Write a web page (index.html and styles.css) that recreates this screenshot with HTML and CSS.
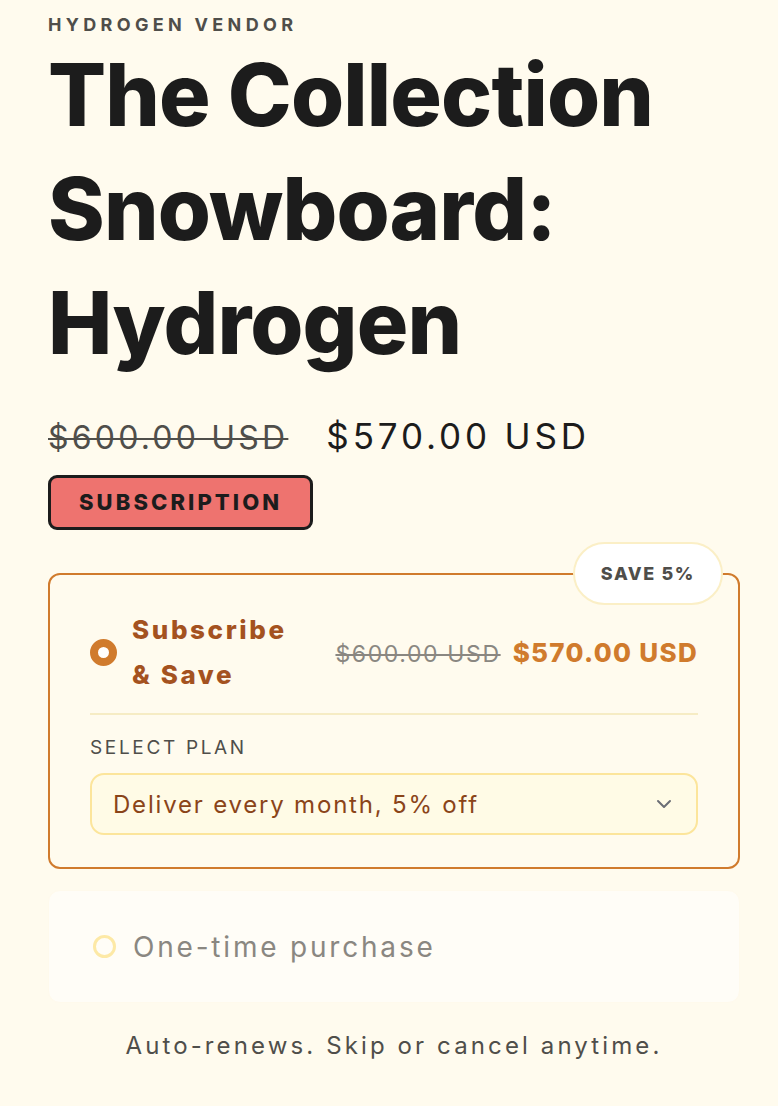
FILE: index.html
```html
<!DOCTYPE html>
<html lang="en">
<head>
<meta charset="utf-8">
<title>The Collection Snowboard: Hydrogen</title>
<link rel="stylesheet" href="styles.css">
</head>
<body>
<main class="product">
  <p class="vendor">HYDROGEN VENDOR</p>
  <h1 class="title">The Collection Snowboard: Hydrogen</h1>
  <div class="price-row">
    <span class="price-old">$600.00 USD</span>
    <span class="price-new">$570.00 USD</span>
  </div>
  <span class="badge">SUBSCRIPTION</span>

  <section class="plan plan-active">
    <span class="save-pill">SAVE 5%</span>
    <div class="plan-head">
      <span class="radio radio-on"></span>
      <span class="plan-name">Subscribe<br>&amp; Save</span>
      <span class="plan-prices">
        <span class="plan-old">$600.00 USD</span>
        <span class="plan-new">$570.00 USD</span>
      </span>
    </div>
    <div class="plan-body">
      <p class="label">SELECT PLAN</p>
      <div class="select">
        <span>Deliver every month, 5% off</span>
        <svg class="chev" width="16" height="10" viewBox="0 0 16 10"><path d="M2 2 L8 8 L14 2" fill="none" stroke="#6b6e75" stroke-width="2" stroke-linecap="round" stroke-linejoin="round"/></svg>
      </div>
    </div>
  </section>

  <section class="plan plan-idle">
    <span class="radio radio-off"></span>
    <span class="idle-name">One-time purchase</span>
  </section>

  <p class="note">Auto-renews. Skip or cancel anytime.</p>
</main>
</body>
</html>
```

FILE: styles.css
```css
* { box-sizing: border-box; }
html, body { margin: 0; padding: 0; }
body {
  background: #fffbee;
  font-family: "Inter", "Liberation Sans", sans-serif;
  color: #1c1c1c;
}
.product {
  padding: 0 38px 0 48px;
  display: flex;
  flex-direction: column;
  align-items: flex-start;
}
.vendor {
  margin: 14px 0 0;
  font-size: 18px;
  line-height: 22px;
  font-weight: 700;
  letter-spacing: 0.24em;
  color: #4f4e4a;
}
.title {
  margin: 2px 0 0;
  font-size: 86px;
  line-height: 114px;
  font-weight: 800;
  letter-spacing: -0.01em;
  color: #1c1c1c;
}
.price-row {
  margin-top: 36px;
  display: flex;
  align-items: baseline;
  gap: 38px;
  line-height: 40px;
}
.price-old {
  font-size: 32px;
  letter-spacing: 0.1em;
  color: #4f4e4a;
  text-decoration: line-through;
  text-decoration-thickness: 2px;
}
.price-new {
  font-size: 35px;
  letter-spacing: 0.11em;
  color: #1c1c1c;
}
.badge {
  margin-top: 17px;
  display: inline-block;
  padding: 0 28px;
  height: 55px;
  line-height: 49px;
  border: 3px solid #1c1c1c;
  border-radius: 9px;
  background: #ee736f;
  font-size: 22px;
  font-weight: 800;
  letter-spacing: 0.14em;
  color: #1c1c1c;
}
.plan {
  width: 692px;
  border-radius: 12px;
  position: relative;
}
.plan-active {
  margin-top: 43px;
  border: 2px solid #d07b2d;
  padding: 32px 40px 32px 40px;
}
.save-pill {
  position: absolute;
  top: -33px;
  right: 15px;
  height: 63px;
  padding: 0 26px;
  display: flex;
  align-items: center;
  background: #ffffff;
  border: 2px solid #fbefc6;
  border-radius: 32px;
  font-size: 18px;
  font-weight: 800;
  letter-spacing: 0.09em;
  color: #4f4e4a;
}
.plan-head {
  display: flex;
  align-items: center;
  padding-bottom: 16px;
  border-bottom: 2px solid #f6ecc4;
}
.radio {
  flex: none;
  display: inline-block;
  border-radius: 50%;
}
.radio-on {
  width: 27px;
  height: 27px;
  border: 8px solid #d07b2d;
  background: #ffffff;
}
.plan-name {
  margin-left: 15px;
  font-size: 26px;
  line-height: 45px;
  font-weight: 800;
  letter-spacing: 0.1em;
  color: #a4521f;
}
.plan-prices {
  margin-left: auto;
  display: flex;
  align-items: baseline;
  gap: 12px;
}
.plan-old {
  font-size: 23px;
  letter-spacing: 0.07em;
  color: #8a8781;
  text-decoration: line-through;
  text-decoration-thickness: 2px;
}
.plan-new {
  font-size: 26px;
  font-weight: 800;
  letter-spacing: 0.05em;
  color: #d07b2d;
}
.plan-body { padding-top: 20px; }
.label {
  margin: 0;
  font-size: 19px;
  line-height: 26px;
  letter-spacing: 0.14em;
  color: #4f4e4a;
}
.select {
  margin-top: 12px;
  height: 62px;
  border: 2px solid #fce59b;
  border-radius: 14px;
  background: #fffbe6;
  padding: 0 24px 0 21px;
  display: flex;
  align-items: center;
  justify-content: space-between;
  font-size: 24px;
  letter-spacing: 0.075em;
  color: #8a4419;
}
.plan-idle {
  margin-top: 21px;
  height: 113px;
  background: #fffdf7;
  border: 1px solid #fffaec;
  display: flex;
  align-items: center;
  padding-left: 44px;
}
.radio-off {
  width: 23px;
  height: 23px;
  border: 3px solid #fde9a6;
}
.idle-name {
  margin-left: 17px;
  font-size: 28px;
  letter-spacing: 0.1em;
  color: #8a8781;
}
.note {
  align-self: stretch;
  margin: 27px 0 0;
  text-align: center;
  font-size: 24px;
  line-height: 32px;
  letter-spacing: 0.13em;
  color: #4f4e4a;
}
```
